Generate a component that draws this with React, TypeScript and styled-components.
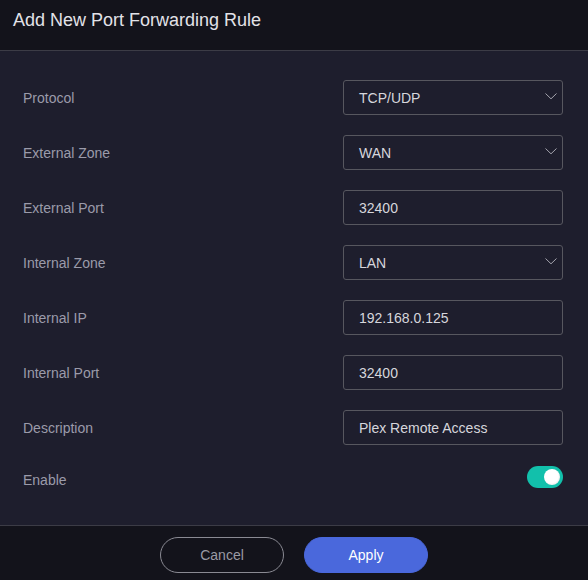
import React, { useState } from "react";
import styled, { createGlobalStyle } from "styled-components";

const GlobalStyle = createGlobalStyle`
  html, body { margin: 0; padding: 0; background: #1e1e2d; }
  body { font-family: "Liberation Sans", Arial, sans-serif; }
  * { box-sizing: border-box; }
`;

const Dialog = styled.div`
  width: 588px;
  height: 580px;
  display: flex;
  flex-direction: column;
  background: #1e1e2d;
  overflow: hidden;
`;

const Header = styled.div`
  height: 51px;
  flex: none;
  background: #13131b;
  border-bottom: 1px solid #3c3c46;
  padding: 9px 13px 0;
`;

const Title = styled.h2`
  margin: 0;
  font-size: 18px;
  font-weight: 400;
  color: #e2e2e8;
  line-height: 22px;
`;

const Body = styled.div`
  flex: 1;
  display: flex;
  flex-direction: column;
  gap: 20px;
  padding: 29px 25px 0 23px;
`;

const Row = styled.div<{ $h?: number }>`
  display: flex;
  align-items: center;
  justify-content: space-between;
  height: ${(p) => p.$h ?? 35}px;
`;

const Label = styled.span`
  font-size: 14px;
  color: #9b9baa;
`;

const FieldBox = styled.div`
  position: relative;
  width: 220px;
  height: 35px;
  border: 1px solid #57575f;
  border-radius: 3px;
  background: #1e1e2d;
  display: flex;
  align-items: center;
  padding-left: 15px;
  font-size: 14px;
  color: #d6d6dc;
`;

const Chevron = styled.svg`
  position: absolute;
  right: 5px;
  top: 12px;
`;

const Toggle = styled.button<{ $on: boolean }>`
  align-self: flex-start;
  margin-top: 1px;
  width: 36px;
  height: 22px;
  border-radius: 11px;
  border: none;
  padding: 0;
  background: ${(p) => (p.$on ? "#12c0ab" : "#555")};
  position: relative;
  cursor: pointer;
`;

const Knob = styled.span<{ $on: boolean }>`
  position: absolute;
  top: 3px;
  left: ${(p) => (p.$on ? "17px" : "3px")};
  width: 16px;
  height: 16px;
  border-radius: 50%;
  background: radial-gradient(circle at 45% 45%, #ffffff 55%, #d0d0d0 100%);
`;

const Footer = styled.div`
  height: 55px;
  flex: none;
  background: #13131b;
  border-top: 1px solid #3c3c46;
  display: flex;
  justify-content: center;
  align-items: flex-start;
  gap: 20px;
  padding-top: 11px;
`;

const Button = styled.button<{ $primary?: boolean }>`
  width: 124px;
  height: 36px;
  border-radius: 18px;
  font-family: "Liberation Sans", Arial, sans-serif;
  font-size: 14px;
  cursor: pointer;
  border: 1px solid ${(p) => (p.$primary ? "#4a68dc" : "#8a8a93")};
  background: ${(p) => (p.$primary ? "#4a68dc" : "transparent")};
  color: ${(p) => (p.$primary ? "#ffffff" : "#9a9aa4")};
`;

const ChevronIcon = () => (
  <Chevron width="12" height="7" viewBox="0 0 12 7">
    <path d="M0.5 0.5 L6 5.8 L11.5 0.5" fill="none" stroke="#a4a4ae" strokeWidth="1" />
  </Chevron>
);

type Field = { label: string; value: string; select?: boolean };

const fields: Field[] = [
  { label: "Protocol", value: "TCP/UDP", select: true },
  { label: "External Zone", value: "WAN", select: true },
  { label: "External Port", value: "32400" },
  { label: "Internal Zone", value: "LAN", select: true },
  { label: "Internal IP", value: "192.168.0.125" },
  { label: "Internal Port", value: "32400" },
  { label: "Description", value: "Plex Remote Access" },
];

export default function App() {
  const [enabled, setEnabled] = useState(true);
  return (
    <>
      <GlobalStyle />
      <Dialog>
        <Header>
          <Title>Add New Port Forwarding Rule</Title>
        </Header>
        <Body>
          {fields.map((f) => (
            <Row key={f.label}>
              <Label>{f.label}</Label>
              <FieldBox>
                {f.value}
                {f.select && <ChevronIcon />}
              </FieldBox>
            </Row>
          ))}
          <Row $h={30}>
            <Label>Enable</Label>
            <Toggle $on={enabled} onClick={() => setEnabled(!enabled)}>
              <Knob $on={enabled} />
            </Toggle>
          </Row>
        </Body>
        <Footer>
          <Button>Cancel</Button>
          <Button $primary>Apply</Button>
        </Footer>
      </Dialog>
    </>
  );
}
